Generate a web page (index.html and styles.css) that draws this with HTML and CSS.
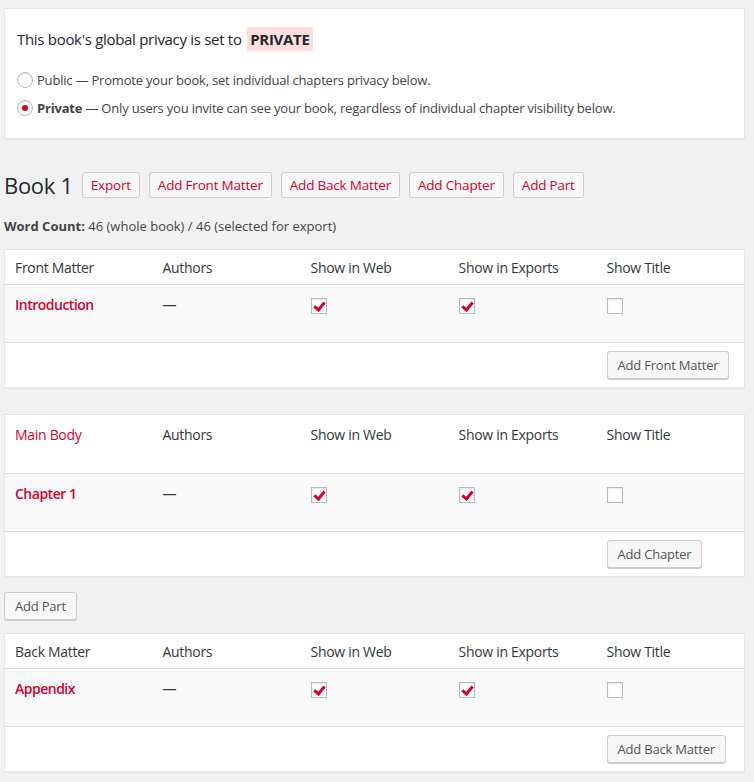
FILE: index.html
```html
<!DOCTYPE html>
<html lang="en">
<head>
<meta charset="utf-8">
<title>Organize</title>
<link rel="stylesheet" href="styles.css">
</head>
<body>
<div class="wrap">
  <div class="card privacy">
    <h2 class="privacy-title">This book's global privacy is set to <span class="badge">PRIVATE</span></h2>
    <label class="radio-row"><span class="radio"></span><span>Public — Promote your book, set individual chapters privacy below.</span></label>
    <label class="radio-row"><span class="radio checked"></span><span><b>Private</b> — Only users you invite can see your book, regardless of individual chapter visibility below.</span></label>
  </div>

  <div class="book-head">
    <h1 class="book-title">Book 1</h1>
    <a class="btn red">Export</a>
    <a class="btn red">Add Front Matter</a>
    <a class="btn red">Add Back Matter</a>
    <a class="btn red">Add Chapter</a>
    <a class="btn red">Add Part</a>
  </div>
  <p class="word-count"><b>Word Count:</b> 46 (whole book) / 46 (selected for export)</p>

  <table class="card list">
    <thead><tr><th>Front Matter</th><th>Authors</th><th>Show in Web</th><th>Show in Exports</th><th>Show Title</th></tr></thead>
    <tbody><tr><td><a class="title">Introduction</a></td><td>—</td><td><span class="cb on"></span></td><td><span class="cb on"></span></td><td><span class="cb"></span></td></tr></tbody>
    <tfoot><tr><td colspan="4"></td><td><a class="btn grey">Add Front Matter</a></td></tr></tfoot>
  </table>

  <table class="card list tall">
    <thead><tr><th><a class="part">Main Body</a></th><th>Authors</th><th>Show in Web</th><th>Show in Exports</th><th>Show Title</th></tr></thead>
    <tbody><tr><td><a class="title">Chapter 1</a></td><td>—</td><td><span class="cb on"></span></td><td><span class="cb on"></span></td><td><span class="cb"></span></td></tr></tbody>
    <tfoot><tr><td colspan="4"></td><td><a class="btn grey">Add Chapter</a></td></tr></tfoot>
  </table>

  <a class="btn grey add-part">Add Part</a>

  <table class="card list">
    <thead><tr><th>Back Matter</th><th>Authors</th><th>Show in Web</th><th>Show in Exports</th><th>Show Title</th></tr></thead>
    <tbody><tr><td><a class="title">Appendix</a></td><td>—</td><td><span class="cb on"></span></td><td><span class="cb on"></span></td><td><span class="cb"></span></td></tr></tbody>
    <tfoot><tr><td colspan="4"></td><td><a class="btn grey">Add Back Matter</a></td></tr></tfoot>
  </table>
</div>
</body>
</html>
```

FILE: styles.css
```css
html, body {
  margin: 0;
  background: #f1f1f1;
}
body {
  font-family: "Open Sans", "Noto Sans", sans-serif;
  color: #444;
  font-size: 13px;
}
.wrap {
  padding: 8px 9px 0 4px;
}
.card {
  background: #fff;
  border: 1px solid #e5e5e5;
  box-shadow: 0 1px 1px rgba(0,0,0,0.04);
}
.privacy {
  padding: 15px 12px 15px 12px;
  height: 99px;
}
.privacy-title {
  margin: 3px 0 15px;
  font-size: 15px;
  font-weight: 400;
  color: #23282d;
  letter-spacing: -0.3px;
}
.badge {
  display: inline-block;
  background: #ffdede;
  font-weight: 700;
  padding: 2px 3px;
  margin-left: 2px;
}
.radio-row {
  display: flex;
  align-items: center;
  gap: 4px;
  height: 28px;
  font-size: 13px;
  color: #444;
  letter-spacing: -0.2px;
}
.radio {
  width: 14px;
  height: 14px;
  border-radius: 50%;
  border: 1px solid #b4b9be;
  box-shadow: inset 0 1px 2px rgba(0,0,0,0.1);
  background: #fff;
  display: flex;
  align-items: center;
  justify-content: center;
  flex: none;
}
.radio.checked::after {
  content: "";
  width: 6px;
  height: 6px;
  border-radius: 50%;
  background: #d4002d;
}
.book-head {
  display: flex;
  align-items: center;
  gap: 9px;
  margin-top: 33px;
}
.book-title {
  margin: 0;
  font-size: 22px;
  font-weight: 400;
  color: #23282d;
  line-height: 26px;
  letter-spacing: -0.3px;
}
.btn {
  display: inline-flex;
  align-items: center;
  height: 24px;
  padding: 0 8px;
  border: 1px solid #ccc;
  border-radius: 3px;
  background: #f7f7f7;
  font-size: 13.5px;
  white-space: nowrap;
  letter-spacing: -0.2px;
}
.btn.red {
  color: #d4002d;
}
.btn.grey {
  color: #555;
  height: 26px;
  padding: 0 10px;
  box-shadow: 0 1px 0 #ccc;
  font-size: 13px;
}
.word-count {
  margin: 19px 0 14px;
  font-size: 13px;
}
.list {
  width: 100%;
  border-collapse: collapse;
  table-layout: fixed;
  font-size: 14px;
  letter-spacing: -0.3px;
  margin-bottom: 26px;
}
.list th {
  text-align: left;
  font-weight: 400;
  color: #32373c;
  padding: 0 10px;
  height: 34px;
  border-bottom: 1px solid #e1e1e1;
  vertical-align: middle;
}
.list.tall {
  margin-bottom: 0;
}
.list.tall th {
  height: 48px;
  vertical-align: top;
  padding-top: 10px;
}
.list tbody td {
  background: #f9f9f9;
  padding: 10px 10px 0;
  height: 47px;
  vertical-align: top;
  border-bottom: 1px solid #e1e1e1;
  color: #32373c;
}
.list tfoot td {
  height: 44px;
  padding: 0 10px;
  vertical-align: middle;
}
.title {
  color: #d4002d;
  font-weight: 600;
  letter-spacing: -0.5px;
}
.part {
  color: #d4002d;
}
.cb {
  display: block;
  width: 14px;
  height: 14px;
  margin-top: 3px;
  border: 1px solid #b4b9be;
  background: #fff;
  box-shadow: inset 0 1px 2px rgba(0,0,0,0.1);
  position: relative;
}
.cb.on::after {
  content: "";
  position: absolute;
  left: 4px;
  top: 1px;
  width: 4px;
  height: 8px;
  border-right: 3px solid #d4002d;
  border-bottom: 3px solid #d4002d;
  transform: rotate(40deg);
}
.add-part {
  margin: 15px 0 13px;
}
```
